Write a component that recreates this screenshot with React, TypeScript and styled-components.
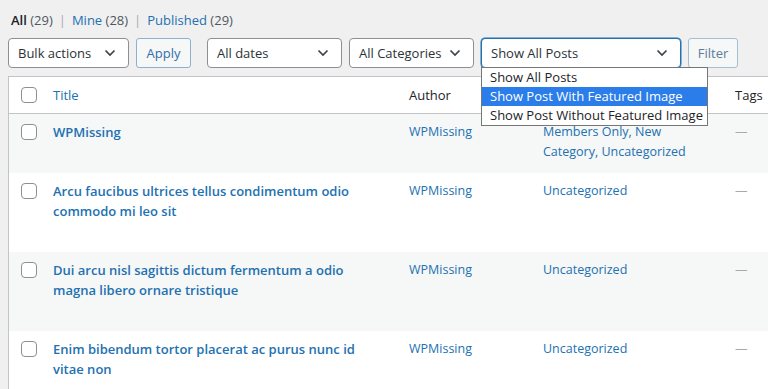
import styled, { createGlobalStyle } from 'styled-components';

const GlobalStyle = createGlobalStyle`
html, body {
  margin: 0;
  padding: 0;
  background: #f0f0f1;
  overflow: hidden;
}
body {
  font-family: "Open Sans", "Noto Sans", sans-serif;
  font-size: 13px;
  color: #3c434a;
}
`;

const Page = styled.div`
  width: 768px;
  height: 389px;
  overflow: hidden;
  padding: 10px 0 0 8px;
  box-sizing: border-box;
`;

const SubSubSub = styled.ul`
  display: flex;
  list-style: none;
  margin: 0 0 8px 3px;
  padding: 0;
  line-height: 20px;
  color: #50575e;
`;

const SubItem = styled.li`
  white-space: pre;
`;

const SubLink = styled.a<{ $current?: boolean }>`
  color: ${p => (p.$current ? '#1d2327' : '#2271b1')};
  font-weight: ${p => (p.$current ? 600 : 400)};
  text-decoration: none;
`;

const Sep = styled.span`
  color: #a7aaad;
  margin: 0 6px;
`;

const Toolbar = styled.div`
  display: flex;
  align-items: center;
  height: 30px;
  margin-bottom: 8px;
`;

const SelectWrap = styled.div<{ $w: number; $gap?: number }>`
  position: relative;
  width: ${p => p.$w}px;
  margin-right: ${p => p.$gap ?? 7}px;
  flex-shrink: 0;
`;

const SelectBox = styled.div<{ $focus?: boolean }>`
  display: flex;
  align-items: center;
  justify-content: space-between;
  box-sizing: border-box;
  height: 30px;
  padding: 0 12px 0 9px;
  background: #fff;
  border: 1px solid ${p => (p.$focus ? '#2271b1' : '#8c8f94')};
  box-shadow: ${p => (p.$focus ? '0 0 0 0.5px #2271b1' : 'none')};
  border-radius: 4px;
  color: #2c3338;
  font-size: 13px;
  white-space: nowrap;
`;

const Chevron = () => (
  <svg width="12" height="8" viewBox="0 0 12 8" fill="none">
    <path d="M1.5 1.5 L6 6 L10.5 1.5" stroke="#3c434a" strokeWidth="1.7" />
  </svg>
);

const Button = styled.button<{ $w: number; $gap?: number }>`
  box-sizing: border-box;
  width: ${p => p.$w}px;
  height: 30px;
  margin-right: ${p => p.$gap ?? 7}px;
  padding: 0;
  background: #f6f7f7;
  border: 1px solid #8fb1d1;
  border-radius: 3px;
  color: #2f6fad;
  font-family: inherit;
  font-size: 13px;
  flex-shrink: 0;
`;

const FilterButton = styled(Button)`
  border-color: #a6bed3;
  color: #5b7d9c;
`;

const Dropdown = styled.ul`
  position: absolute;
  top: 29px;
  left: 0;
  width: 227px;
  margin: 0;
  padding: 0;
  list-style: none;
  background: #fff;
  border: 1px solid #767676;
  box-sizing: border-box;
  z-index: 5;
`;

const Option = styled.li<{ $selected?: boolean }>`
  height: 19px;
  line-height: 19px;
  padding-left: 8px;
  font-size: 13px;
  white-space: nowrap;
  color: ${p => (p.$selected ? '#fff' : '#1d2327')};
  background: ${p => (p.$selected ? '#2b7de9' : 'transparent')};
`;

const Table = styled.div`
  width: 820px;
  background: #fff;
  border: 1px solid #c3c4c7;
  border-right: none;
`;

const Row = styled.div<{ $alt?: boolean; $head?: boolean }>`
  display: grid;
  grid-template-columns: 34px 356px 134px 192px 1fr;
  background: ${p => (p.$alt ? '#f6f7f7' : '#fff')};
  border-bottom: ${p => (p.$head ? '1px solid #c3c4c7' : 'none')};
  min-height: ${p => (p.$head ? 36 : 0)}px;
  align-items: ${p => (p.$head ? 'center' : 'start')};
`;

const Cell = styled.div<{ $head?: boolean }>`
  padding: ${p => (p.$head ? '0 10px' : '8px 10px')};
  line-height: 20px;
  font-size: ${p => (p.$head ? 13 : 12.5)}px;
  color: ${p => (p.$head ? '#1d2327' : '#2271b1')};
`;

const TitleCell = styled(Cell)`
  padding-right: 36px;
`;

const CheckCell = styled.div<{ $head?: boolean }>`
  display: flex;
  justify-content: flex-end;
  padding-top: ${p => (p.$head ? 0 : 10)}px;
  align-items: center;
`;

const Check = styled.span`
  display: block;
  width: 16px;
  height: 16px;
  box-sizing: border-box;
  border: 1px solid #8c8f94;
  border-radius: 4px;
  background: #fff;
  margin-right: 6px;
`;

const TitleLink = styled.a`
  display: block;
  color: #2271b1;
  font-weight: 600;
  font-size: 13px;
  text-decoration: none;
`;

const RowActions = styled.div`
  visibility: hidden;
  height: 23px;
`;

const SortLink = styled.a`
  color: #2271b1;
  text-decoration: none;
`;

const Dash = styled.span`
  color: #a7aaad;
`;

const posts = [
  { title: 'WPMissing', cats: 'Members Only, New Category, Uncategorized' },
  { title: 'Arcu faucibus ultrices tellus condimentum odio commodo mi leo sit', cats: 'Uncategorized' },
  { title: 'Dui arcu nisl sagittis dictum fermentum a odio magna libero ornare tristique', cats: 'Uncategorized' },
  { title: 'Enim bibendum tortor placerat ac purus nunc id vitae non', cats: 'Uncategorized' },
];

export default function App() {
  return (
    <>
      <GlobalStyle />
      <Page>
        <SubSubSub>
          <SubItem>
            <SubLink $current>All</SubLink> (29)
            <Sep>|</Sep>
          </SubItem>
          <SubItem>
            <SubLink>Mine</SubLink> (28)
            <Sep>|</Sep>
          </SubItem>
          <SubItem>
            <SubLink>Published</SubLink> (29)
          </SubItem>
        </SubSubSub>

        <Toolbar>
          <SelectWrap $w={121}>
            <SelectBox>
              Bulk actions <Chevron />
            </SelectBox>
          </SelectWrap>
          <Button $w={55} $gap={16}>Apply</Button>
          <SelectWrap $w={135}>
            <SelectBox>
              All dates <Chevron />
            </SelectBox>
          </SelectWrap>
          <SelectWrap $w={125}>
            <SelectBox>
              All Categories <Chevron />
            </SelectBox>
          </SelectWrap>
          <SelectWrap $w={200}>
            <SelectBox $focus>
              Show All Posts <Chevron />
            </SelectBox>
            <Dropdown>
              <Option>Show All Posts</Option>
              <Option $selected>Show Post With Featured Image</Option>
              <Option>Show Post Without Featured Image</Option>
            </Dropdown>
          </SelectWrap>
          <FilterButton $w={50}>Filter</FilterButton>
        </Toolbar>

        <Table>
          <Row $head>
            <CheckCell $head>
              <Check />
            </CheckCell>
            <Cell $head>
              <SortLink>Title</SortLink>
            </Cell>
            <Cell $head>Author</Cell>
            <Cell $head>Categories</Cell>
            <Cell $head>Tags</Cell>
          </Row>
          {posts.map((post, i) => (
            <Row key={post.title} $alt={i % 2 === 0}>
              <CheckCell>
                <Check />
              </CheckCell>
              <TitleCell>
                <TitleLink>{post.title}</TitleLink>
                <RowActions />
              </TitleCell>
              <Cell>WPMissing</Cell>
              <Cell>{post.cats}</Cell>
              <Cell>
                <Dash>—</Dash>
              </Cell>
            </Row>
          ))}
        </Table>
      </Page>
    </>
  );
}
